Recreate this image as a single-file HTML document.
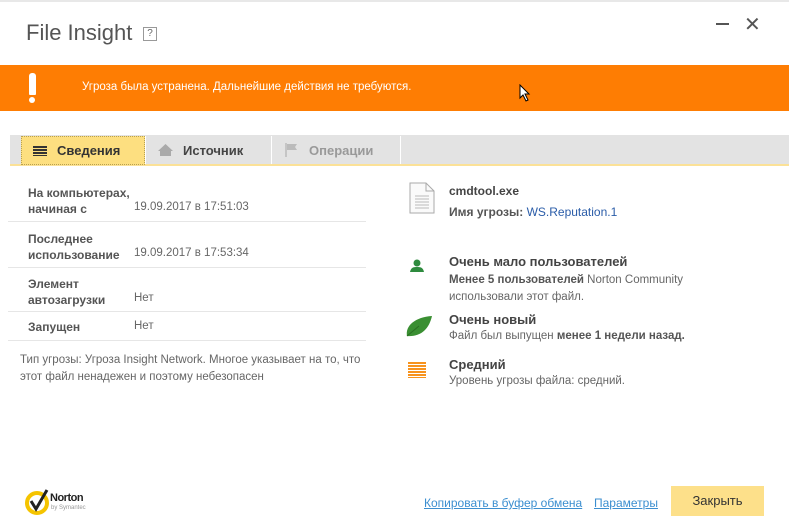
<!DOCTYPE html>
<html><head><meta charset="utf-8"><style>
*{margin:0;padding:0;box-sizing:border-box}
body{width:789px;height:529px;background:#fff;font-family:"Liberation Sans",sans-serif;color:#444;position:relative;overflow:hidden;font-size:12px}
.a{position:absolute;white-space:nowrap}
.b{font-weight:bold;color:#555}
.sep{position:absolute;left:8px;width:358px;height:1px;background:#e6e6e6}
.r{font-size:11.5px;color:#666}
</style></head><body>
<div class="a" style="left:0;top:0;width:789px;height:2px;background:#e8e8e8"></div>
<div class="a" style="left:26px;top:20px;font-size:22px;color:#555">File Insight</div>
<div class="a" style="left:143px;top:27px;width:14px;height:14px;border:1px solid #999;font-size:10px;text-align:center;line-height:12px;color:#666">?</div>
<div class="a" style="left:716px;top:23px;width:13px;height:2px;background:#555"></div>
<div class="a" style="left:744px;top:12px;font-size:20px;color:#555">✕</div>
<div class="a" style="left:0;top:65px;width:789px;height:46px;background:#fe7d03"></div>
<div class="a" style="left:29px;top:73px;width:7px;height:22px;background:#fff;border-radius:3px 3px 1px 1px"></div>
<div class="a" style="left:29px;top:97px;width:6px;height:6px;background:#fff;border-radius:3px"></div>
<div class="a" style="left:82px;top:81px;color:#fff;font-size:11.5px">Угроза была устранена. Дальнейшие действия не требуются.</div>
<svg class="a" style="left:519px;top:84px" width="12" height="18"><path d="M1 1L1 14L4 11L7 17L9 16L6 10L10 10Z" fill="#fff" stroke="#000"/></svg>
<div class="a" style="left:10px;top:135px;width:779px;height:30px;background:#e3e3e3"></div>
<div class="a" style="left:10px;top:164px;width:779px;height:2px;background:#fbe197"></div>
<div class="a" style="left:21px;top:136px;width:124px;height:29px;background:#fddf80;border:1px dotted #b8a050"></div>
<div class="a" style="left:33px;top:146px;width:14px;height:10px;background:repeating-linear-gradient(#333 0 2px,transparent 2px 3px)"></div>
<div class="a" style="left:57px;top:143px;font-weight:bold;font-size:13px;color:#333">Сведения</div>
<div class="a" style="left:145px;top:136px;width:1px;height:28px;background:#fff"></div>
<svg class="a" style="left:157px;top:143px" width="17" height="14"><path d="M8.5 1L16 8H14V13H3V8H1Z" fill="#aaa"/></svg>
<div class="a" style="left:183px;top:143px;font-weight:bold;font-size:13px;color:#444">Источник</div>
<div class="a" style="left:271px;top:136px;width:1px;height:28px;background:#fff"></div>
<svg class="a" style="left:285px;top:142px" width="14" height="16"><path d="M1 1V15" stroke="#bbb" stroke-width="1.5"/><path d="M2 2H12L10 5L12 8H2Z" fill="#bbb"/></svg>
<div class="a" style="left:309px;top:143px;font-weight:bold;font-size:13px;color:#999">Операции</div>
<div class="a" style="left:400px;top:136px;width:1px;height:28px;background:#fff"></div>

<div class="a b" style="left:28px;top:185px;line-height:16px">На компьютерах,<br>начиная с</div>
<div class="a r" style="left:134px;top:201px">19.09.2017 в 17:51:03</div>
<div class="sep" style="top:221px"></div>
<div class="a b" style="left:28px;top:231px;line-height:16px">Последнее<br>использование</div>
<div class="a r" style="left:134px;top:247px">19.09.2017 в 17:53:34</div>
<div class="sep" style="top:267px"></div>
<div class="a b" style="left:28px;top:276px;line-height:16px">Элемент<br>автозагрузки</div>
<div class="a r" style="left:134px;top:292px">Нет</div>
<div class="sep" style="top:311px"></div>
<div class="a b" style="left:28px;top:320px">Запущен</div>
<div class="a r" style="left:134px;top:320px">Нет</div>
<div class="sep" style="top:340px"></div>
<div class="a r" style="left:20px;top:352px;line-height:17px">Тип угрозы: Угроза Insight Network. Многое указывает на то, что<br>этот файл ненадежен и поэтому небезопасен</div>

<svg class="a" style="left:409px;top:182px" width="26" height="32"><path d="M1 1H17L25 9V31H1Z" fill="#fafafa" stroke="#aaa"/><path d="M17 1V9H25" fill="none" stroke="#aaa"/><path d="M6 14H20M6 17H20M6 20H20M6 23H20M6 26H20" stroke="#bbb"/></svg>
<div class="a b" style="left:449px;top:184px;color:#444">cmdtool.exe</div>
<div class="a b" style="left:449px;top:205px;color:#555">Имя угрозы: <span style="font-weight:normal;color:#2a5ca8">WS.Reputation.1</span></div>

<svg class="a" style="left:410px;top:259px" width="14" height="14"><circle cx="7" cy="4" r="3.5" fill="#2e8b3e"/><path d="M0 13C1 8 4 8 7 8S13 8 14 13Z" fill="#2e8b3e"/></svg>
<div class="a" style="left:449px;top:254px;font-weight:bold;font-size:13px;color:#444">Очень мало пользователей</div>
<div class="a r" style="left:449px;top:272px;line-height:17px"><b style="color:#555">Менее 5 пользователей</b> Norton Community<br>использовали этот файл.</div>
<svg class="a" style="left:405px;top:314px" width="28" height="24"><path d="M2 22C0 12 10 3 27 2C24 15 16 23 2 22Z" fill="#3a8f32"/><path d="M2 22L14 12" stroke="#2a6f22"/></svg>
<div class="a" style="left:449px;top:312px;font-weight:bold;font-size:13px;color:#444">Очень новый</div>
<div class="a r" style="left:449px;top:330px">Файл был выпущен <b style="color:#555">менее 1 недели назад.</b></div>
<div class="a" style="left:408px;top:362px;width:18px;height:16px;background:repeating-linear-gradient(#f7931e 0 2px,#fff 2px 3px)"></div>
<div class="a" style="left:449px;top:357px;font-weight:bold;font-size:13px;color:#444">Средний</div>
<div class="a r" style="left:449px;top:375px">Уровень угрозы файла: средний.</div>

<svg class="a" style="left:25px;top:488px" width="28" height="28"><circle cx="12" cy="15" r="10" fill="none" stroke="#f5c400" stroke-width="4"/><path d="M6 13L11 21L22 2" fill="none" stroke="#222" stroke-width="3"/></svg>
<div class="a" style="left:50px;top:492px;font-weight:bold;font-size:11px;color:#222;letter-spacing:-0.5px">Norton</div>
<div class="a" style="left:51px;top:505px;font-size:6px;color:#999">by Symantec</div>
<div class="a" style="left:424px;top:496px;color:#3c8fd0;text-decoration:underline;font-size:12px">Копировать в буфер обмена</div>
<div class="a" style="left:594px;top:496px;color:#3c8fd0;text-decoration:underline;font-size:12px">Параметры</div>
<div class="a" style="left:671px;top:486px;width:93px;height:30px;background:#fde08a;text-align:center;line-height:30px;font-size:13px;color:#333">Закрыть</div>
</body></html>
